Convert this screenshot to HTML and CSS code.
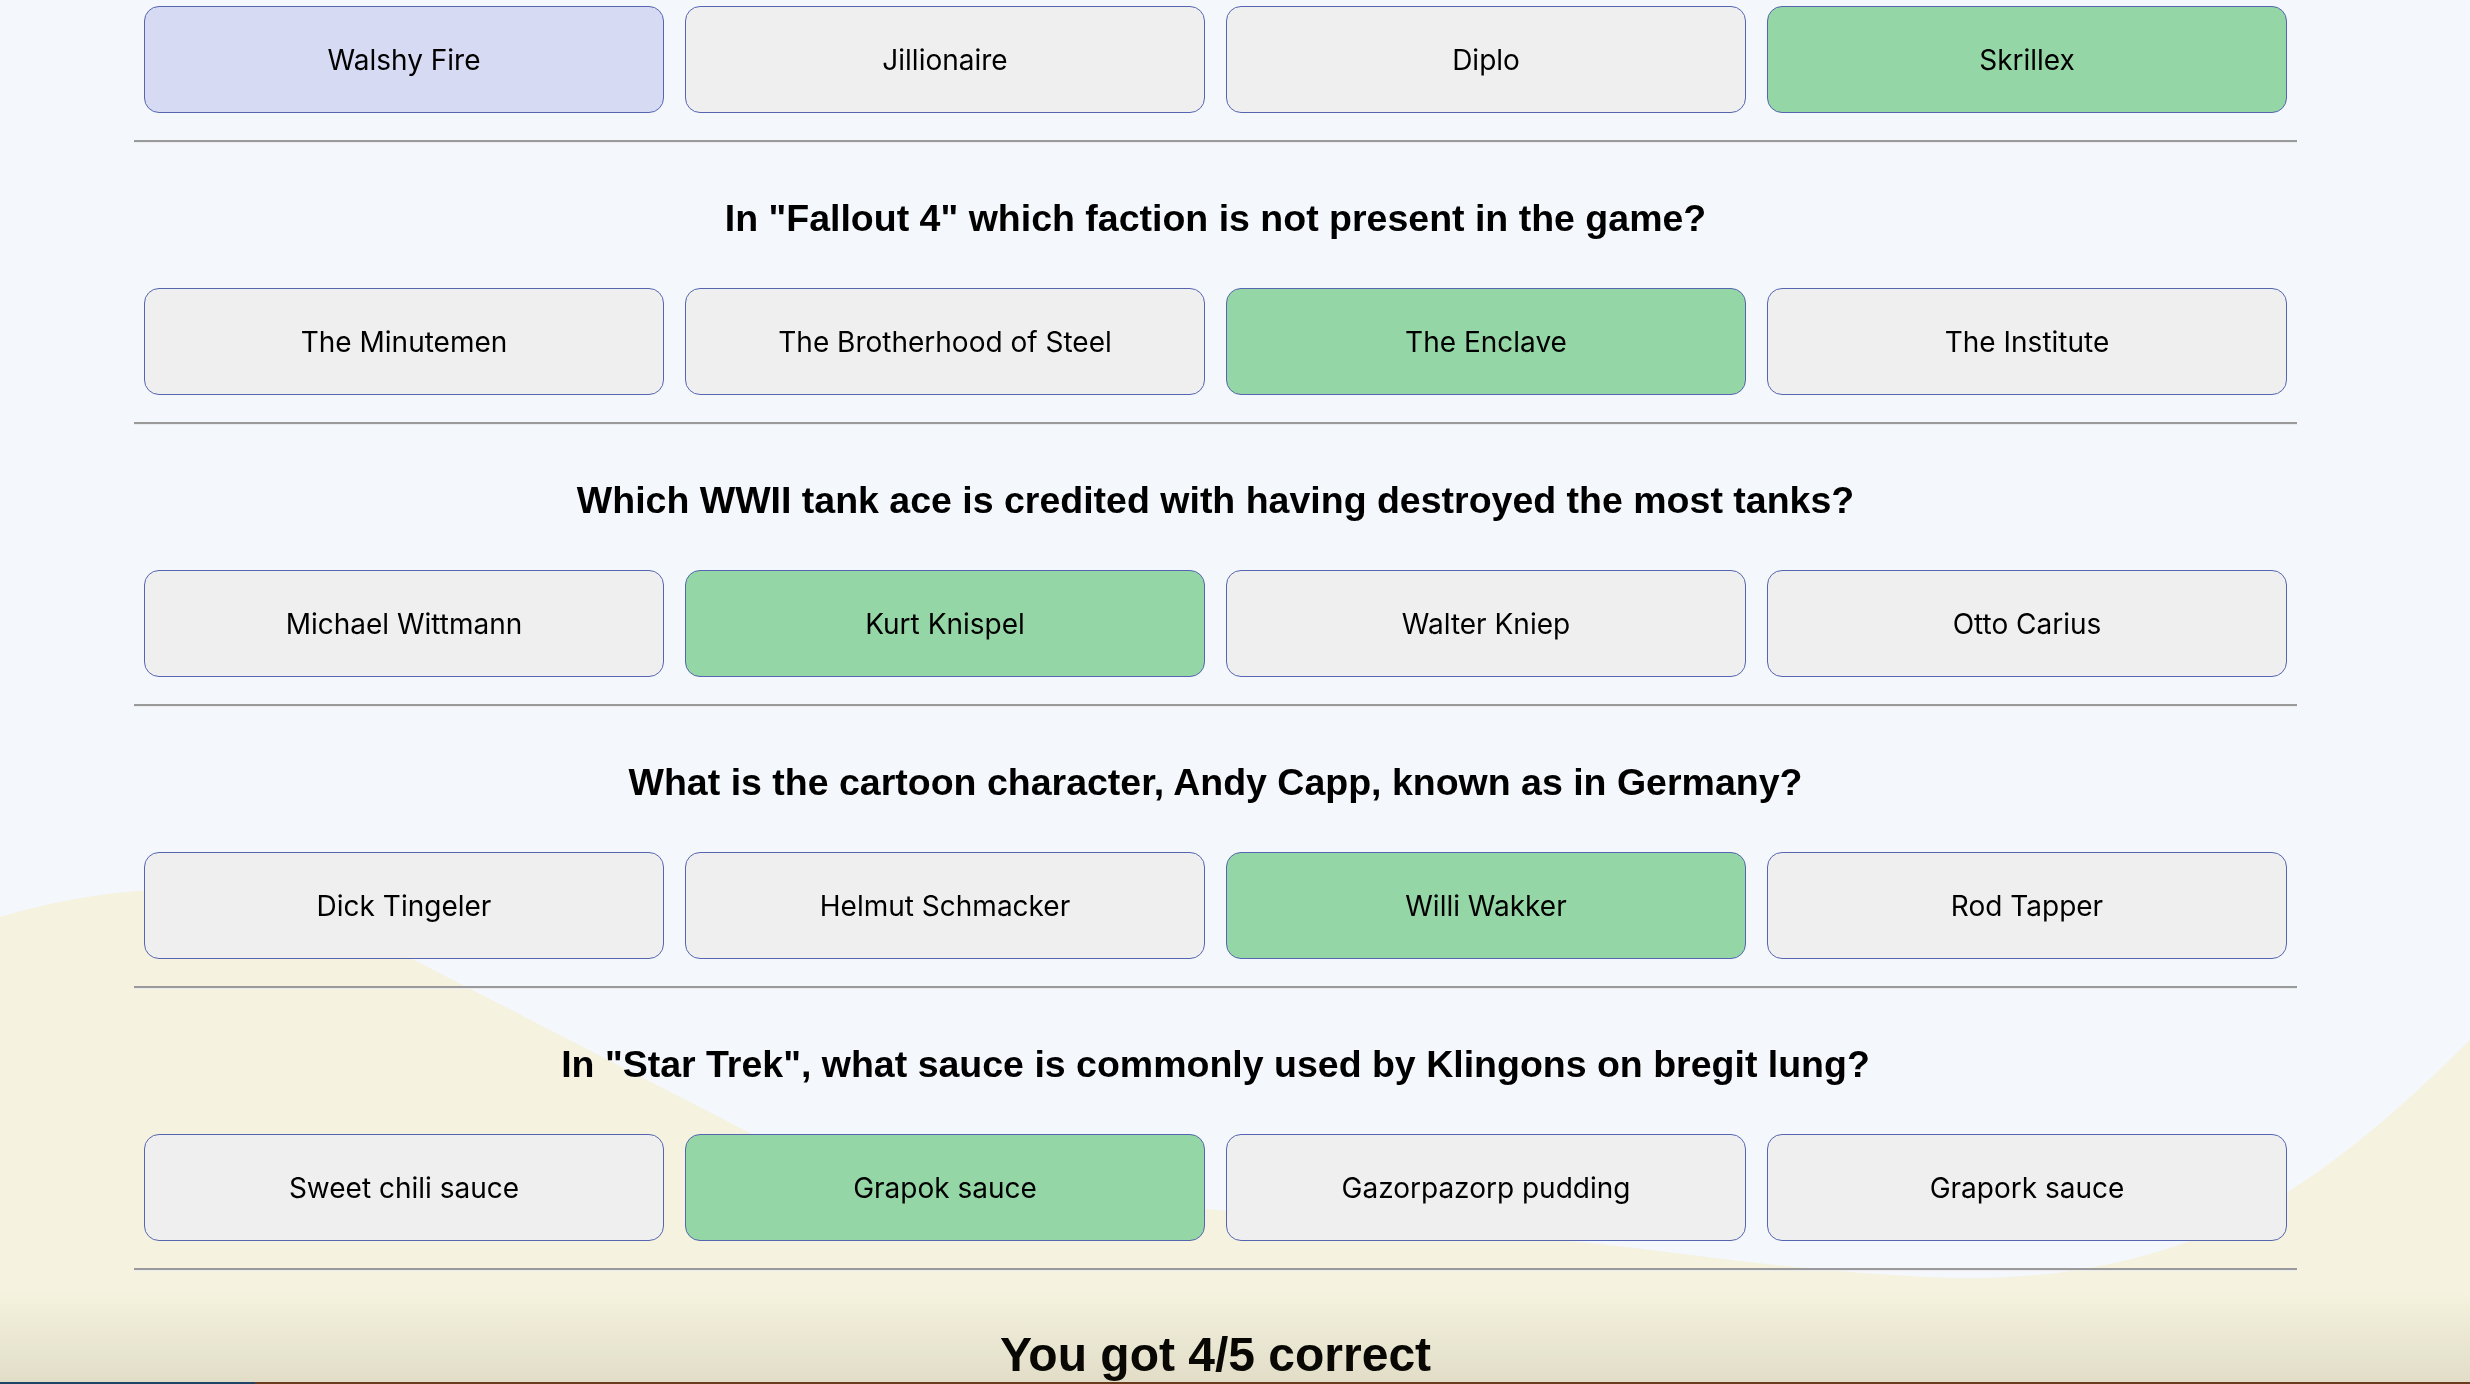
FILE: index.html
```html
<!DOCTYPE html>
<html lang="en">
<head>
<meta charset="utf-8">
<title>Quiz results</title>
<link rel="stylesheet" href="styles.css">
</head>
<body>
<div class="bg" aria-hidden="true">
  <svg width="2470" height="1384" viewBox="0 0 2470 1384" xmlns="http://www.w3.org/2000/svg">
    <rect x="0" y="0" width="2470" height="1384" fill="#f5f2df"/>
    <path fill="#f4f7fc" d="M0,0 H2470 V1040 C2400,1110 2330,1170 2250,1215 C2150,1265 2050,1280 1950,1278 C1800,1272 1700,1255 1600,1244 C1400,1225 1200,1210 1000,1190 C880,1178 820,1165 750,1133 L418,962 C330,918 260,888 180,889 C110,890 50,902 0,917 Z"/>
  </svg>
</div>

<main class="quiz">
  <div class="answers">
    <button class="answer selected">Walshy Fire</button>
    <button class="answer">Jillionaire</button>
    <button class="answer">Diplo</button>
    <button class="answer correct">Skrillex</button>
  </div>
  <hr class="sep">

  <section class="question">
    <h2 class="q-title">In "Fallout 4" which faction is not present in the game?</h2>
    <div class="answers">
      <button class="answer">The Minutemen</button>
      <button class="answer">The Brotherhood of Steel</button>
      <button class="answer correct">The Enclave</button>
      <button class="answer">The Institute</button>
    </div>
    <hr class="sep">
  </section>

  <section class="question">
    <h2 class="q-title">Which WWII tank ace is credited with having destroyed the most tanks?</h2>
    <div class="answers">
      <button class="answer">Michael Wittmann</button>
      <button class="answer correct">Kurt Knispel</button>
      <button class="answer">Walter Kniep</button>
      <button class="answer">Otto Carius</button>
    </div>
    <hr class="sep">
  </section>

  <section class="question">
    <h2 class="q-title">What is the cartoon character, Andy Capp, known as in Germany?</h2>
    <div class="answers">
      <button class="answer">Dick Tingeler</button>
      <button class="answer">Helmut Schmacker</button>
      <button class="answer correct">Willi Wakker</button>
      <button class="answer">Rod Tapper</button>
    </div>
    <hr class="sep">
  </section>

  <section class="question">
    <h2 class="q-title">In "Star Trek", what sauce is commonly used by Klingons on bregit lung?</h2>
    <div class="answers">
      <button class="answer">Sweet chili sauce</button>
      <button class="answer correct">Grapok sauce</button>
      <button class="answer">Gazorpazorp pudding</button>
      <button class="answer">Grapork sauce</button>
    </div>
    <hr class="sep">
  </section>

  <h1 class="score">You got 4/5 correct</h1>
</main>

<div class="shade" aria-hidden="true"></div>
</body>
</html>
```
FILE: styles.css
```css
html, body {
  margin: 0;
  padding: 0;
  height: 1384px;
  overflow: hidden;
}

body {
  background: #f5f2df;
  font-family: "Liberation Sans", Arial, sans-serif;
  color: #000;
}

.bg {
  position: fixed;
  top: 0;
  left: 0;
  width: 2470px;
  height: 1384px;
  z-index: -1;
}

.bg svg {
  display: block;
}

.quiz {
  width: 2163px;
  margin-left: 134px;
  padding-top: 6px;
}

.answers {
  display: grid;
  grid-template-columns: repeat(4, 520px);
  column-gap: 21px;
  padding: 0 10px;
}

.answer {
  height: 107px;
  margin: 0;
  padding: 0;
  border: 1px solid #5565b0;
  border-radius: 15px;
  background: #efefef;
  font-family: "Inter", "Liberation Sans", sans-serif;
  font-size: 28px;
  color: #000;
  text-align: center;
}

.answer.selected {
  background: #d6dbf3;
}

.answer.correct {
  background: #94d6a5;
}

.sep {
  margin: 27px 0 0;
  height: 0;
  border: 0;
  border-top: 2px solid #9a9a9a;
  border-bottom: 1px solid #e9ebee;
}

.q-title {
  margin: 55px 0 50px;
  font-size: 37.5px;
  line-height: 40px;
  font-weight: bold;
  text-align: center;
}

.score {
  margin: 60px 0 0;
  font-size: 48px;
  line-height: 48px;
  font-weight: bold;
  text-align: center;
}

.shade {
  position: fixed;
  left: 0;
  right: 0;
  bottom: 0;
  height: 92px;
  background:
    linear-gradient(to right, #1f4466 0, #1f4466 255px, #6a3b1c 255px, #6a3b1c 100%) bottom / 100% 2px no-repeat,
    linear-gradient(to bottom, rgba(90, 80, 40, 0) 0%, rgba(90, 80, 40, 0.13) 100%);
  pointer-events: none;
}
```
